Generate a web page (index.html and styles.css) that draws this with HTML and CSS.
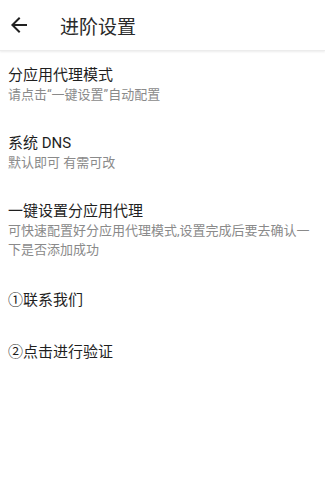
FILE: index.html
```html
<!DOCTYPE html>
<html lang="zh-CN">
<head>
  <meta charset="UTF-8">
  <meta name="viewport" content="width=device-width, initial-scale=1.0">
  <title>进阶设置</title>
  <link rel="stylesheet" href="styles.css">
</head>
<body>

  <div class="toolbar">
      <button class="back-button">
          <svg width="24" height="24" viewBox="0 0 24 24">
              <path d="M20 11H7.83l5.59-5.59L12 4l-8 8 8 8 1.41-1.41L7.83 13H20v-2z" fill="#212121"/>
          </svg>
      </button>
      <h1 class="toolbar-title">进阶设置</h1>
  </div>

  <div class="settings-list">
      <div class="setting-item">
          <p class="setting-title">分应用代理模式</p>
          <p class="setting-summary">请点击“一键设置”自动配置</p>
      </div>
      <div class="setting-item">
          <p class="setting-title">系统 DNS</p>
          <p class="setting-summary">默认即可 有需可改</p>
      </div>
      <div class="setting-item">
          <p class="setting-title">一键设置分应用代理</p>
          <p class="setting-summary">可快速配置好分应用代理模式,设置完成后要去确认一下是否添加成功</p>
      </div>
      <div class="setting-item single">
          <p class="setting-title">①联系我们</p>
      </div>
      <div class="setting-item single">
          <p class="setting-title">②点击进行验证</p>
      </div>
  </div>

</body>
</html>
```

FILE: styles.css
```css
body {
    margin: 0;
    font-family: Roboto, "Noto Sans CJK SC", sans-serif;
    background-color: white;
    color: #212121;
}

.toolbar {
    height: 50px;
    display: flex;
    align-items: center;
    position: relative;
    box-shadow: 0 1px 2px rgba(0, 0, 0, 0.08);
    border-bottom: 1px solid #ececec;
}

.back-button {
    width: 24px;
    height: 24px;
    margin-left: 7px;
    padding: 0;
    border: none;
    background: none;
    display: flex;
}

.toolbar-title {
    margin: 0 0 0 29px;
    font-size: 19px;
    font-weight: normal;
    color: #2a2a2a;
}

.setting-item {
    padding: 15px 8px;
}

.setting-item.single {
    padding: 16px 8px;
}

.setting-title {
    margin: 0;
    font-size: 15px;
    line-height: 19px;
    color: #1f1f1f;
}

.single .setting-title {
    line-height: 20px;
}

.setting-summary {
    margin: 0;
    font-size: 13px;
    line-height: 19px;
    color: #8a8a8a;
}
```
